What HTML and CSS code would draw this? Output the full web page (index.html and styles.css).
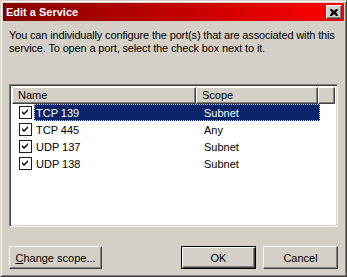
FILE: index.html
```html
<!DOCTYPE html>
<html lang="en">
<head>
    <meta charset="UTF-8">
    <title>Edit a Service</title>
    <link rel="stylesheet" href="styles.css">
</head>
<body>
    <div class="window">
        <div class="titlebar">
            <span class="title">Edit a Service</span>
            <button class="close">
                <svg width="8" height="7" viewBox="0 0 8 7">
                    <path d="M0 0h2l2 2 2-2h2v1l-2 2.5 2 2.5v1h-2l-2-2-2 2h-2v-1l2-2.5-2-2.5z" fill="#000"/>
                </svg>
            </button>
        </div>
        <div class="content">
            <p class="intro">You can individually configure the port(s) that are associated with this service. To open a port, select the check box next to it.</p>

            <div class="listview">
                <div class="lv-head">
                    <div class="col c-name">Name</div>
                    <div class="col c-scope">Scope</div>
                    <div class="col c-fill"></div>
                </div>
                <div class="lv-row selected">
                    <span class="chk"><svg width="13" height="13" viewBox="0 0 13 13"><path d="M3 5l2 2 4-4v2l-4 4-2-2z" fill="#000"/></svg></span>
                    <span class="cell">
                        <span class="c-name-txt">TCP 139</span>
                        <span class="c-scope-txt">Subnet</span>
                    </span>
                </div>
                <div class="lv-row">
                    <span class="chk"><svg width="13" height="13" viewBox="0 0 13 13"><path d="M3 5l2 2 4-4v2l-4 4-2-2z" fill="#000"/></svg></span>
                    <span class="cell">
                        <span class="c-name-txt">TCP 445</span>
                        <span class="c-scope-txt">Any</span>
                    </span>
                </div>
                <div class="lv-row">
                    <span class="chk"><svg width="13" height="13" viewBox="0 0 13 13"><path d="M3 5l2 2 4-4v2l-4 4-2-2z" fill="#000"/></svg></span>
                    <span class="cell">
                        <span class="c-name-txt">UDP 137</span>
                        <span class="c-scope-txt">Subnet</span>
                    </span>
                </div>
                <div class="lv-row">
                    <span class="chk"><svg width="13" height="13" viewBox="0 0 13 13"><path d="M3 5l2 2 4-4v2l-4 4-2-2z" fill="#000"/></svg></span>
                    <span class="cell">
                        <span class="c-name-txt">UDP 138</span>
                        <span class="c-scope-txt">Subnet</span>
                    </span>
                </div>
            </div>

            <div class="buttons">
                <button class="btn btn-scope"><u>C</u>hange scope...</button>
                <div class="right">
                    <button class="btn default">OK</button>
                    <button class="btn">Cancel</button>
                </div>
            </div>
        </div>
    </div>
</body>
</html>
```

FILE: styles.css
```css
body{
    margin: 0;
    background-color: #d4d0c8;
    font-family: "Liberation Sans", Arial, sans-serif;
    font-size: 11px;
    color: #000;
}

.window{
    width: 347px;
    height: 277px;
    box-sizing: border-box;
    background: #d4d0c8;
    border: 1px solid;
    border-color: #d4d0c8 #404040 #404040 #d4d0c8;
    box-shadow: inset 1px 1px #fff, inset -1px -1px #808080;
    padding: 2px;
    display: flex;
    flex-direction: column;
}

.titlebar{
    height: 18px;
    display: flex;
    align-items: center;
    justify-content: space-between;
    background: linear-gradient(90deg, #840000 0%, #ff0000 100%);
    padding: 0 2px 0 3px;
}
.title{
    color: #fff;
    font-weight: bold;
    font-size: 11px;
}
.close{
    width: 16px;
    height: 14px;
    padding: 0;
    background: #d4d0c8;
    border: 1px solid;
    border-color: #fff #404040 #404040 #fff;
    box-shadow: inset -1px -1px #808080;
    display: flex;
    align-items: center;
    justify-content: center;
}

.content{
    flex: 1;
    padding: 0 6px;
    display: flex;
    flex-direction: column;
}
.intro{
    margin: 8px 0 0 0;
    line-height: 13px;
    letter-spacing: -0.15px;
}

.listview{
    margin-top: 29px;
    height: 143px;
    box-sizing: border-box;
    background: #fff;
    border: 1px solid;
    border-color: #808080 #fff #fff #808080;
    box-shadow: inset 1px 1px #404040, inset -1px -1px #d4d0c8;
    padding: 2px;
}
.lv-head{
    display: flex;
    height: 17px;
}
.col{
    box-sizing: border-box;
    background: #d4d0c8;
    border: 1px solid;
    border-color: #fff #404040 #404040 #fff;
    box-shadow: inset -1px -1px #808080;
    padding: 1px 0 0 5px;
    line-height: 13px;
}
.c-name{ width: 184px; }
.c-scope{ width: 122px; }
.c-fill{ flex: 1; }

.lv-row{
    display: flex;
    align-items: center;
    height: 17px;
}
.chk{
    width: 13px;
    height: 13px;
    box-sizing: border-box;
    margin: 0 2px 0 7px;
    border: 1px solid #1c1c1c;
    background: #fff;
    display: flex;
}
.chk svg{
    margin: -1px;
}
.cell{
    display: flex;
    width: 286px;
    height: 17px;
    align-items: center;
    box-sizing: border-box;
    border: 1px dotted transparent;
}
.c-name-txt{
    width: 168px;
    padding-left: 1px;
}
.selected .cell{
    background: #0a246a;
    color: #fff;
    border-color: #d4d0c8;
}

.buttons{
    margin-top: 19px;
    display: flex;
    justify-content: space-between;
}
.right{
    display: flex;
    gap: 7px;
}
.btn{
    height: 23px;
    width: 75px;
    font-family: "Liberation Sans", Arial, sans-serif;
    font-size: 11px;
    color: #000;
    background: #d4d0c8;
    border: 1px solid;
    border-color: #fff #404040 #404040 #fff;
    box-shadow: inset -1px -1px #808080;
    padding: 0;
}
.btn-scope{
    width: 93px;
}
.btn.default{
    border: 1px solid #000;
    box-shadow: inset 1px 1px #fff, inset -1px -1px #404040, inset -2px -2px #808080;
}
```
